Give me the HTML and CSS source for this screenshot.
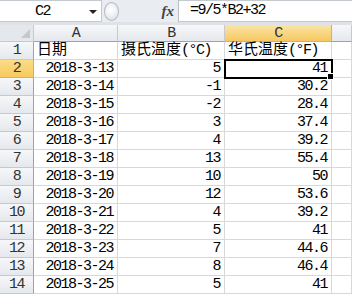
FILE: index.html
```html
<!DOCTYPE html>
<html lang="zh-CN">
<head>
    <meta charset="UTF-8">
    <meta name="viewport" content="width=device-width, initial-scale=1.0">
    <title>温度换算</title>
    <link rel="stylesheet" href="styles.css">
</head>
<body>
    <!-- Formula bar -->
    <div class="formula-bar">
        <div class="name-box">
            <span class="name-text">C2</span>
            <span class="drop-arrow"></span>
        </div>
        <div class="bar-middle">
            <span class="splitter"></span>
            <span class="fx">fx</span>
        </div>
        <div class="formula">=9/5*B2+32</div>
    </div>

    <div class="sheet">
        <div class="hdr corner"><span class="corner-tri"></span></div>
        <div class="hdr col">A</div>
        <div class="hdr col">B</div>
        <div class="hdr col active">C</div>
        <div class="hdr col"></div>
    </div>

    <script>
        const rows = [
            ["2018-3-13", "5", "41"],
            ["2018-3-14", "-1", "30.2"],
            ["2018-3-15", "-2", "28.4"],
            ["2018-3-16", "3", "37.4"],
            ["2018-3-17", "4", "39.2"],
            ["2018-3-18", "13", "55.4"],
            ["2018-3-19", "10", "50"],
            ["2018-3-20", "12", "53.6"],
            ["2018-3-21", "4", "39.2"],
            ["2018-3-22", "5", "41"],
            ["2018-3-23", "7", "44.6"],
            ["2018-3-24", "8", "46.4"],
            ["2018-3-25", "5", "41"]
        ];

        const sheet = document.querySelector('.sheet');

        function addCell(cls, html) {
            const div = document.createElement('div');
            div.className = cls;
            div.innerHTML = html;
            sheet.appendChild(div);
        }

        // header row of titles
        addCell('hdr row', '1');
        addCell('cell text', '日期');
        addCell('cell text', '摄氏温度<span class="latin">(°C)</span>');
        addCell('cell text', '华氏温度<span class="latin">(°F)</span>');
        addCell('cell', '');

        rows.forEach((r, i) => {
            addCell(i === 0 ? 'hdr row active' : 'hdr row', String(i + 2));
            addCell('cell num', r[0]);
            addCell('cell num', r[1]);
            addCell(i === 0 ? 'cell num selected' : 'cell num', r[2]);
            addCell('cell', '');
        });
    </script>
</body>
</html>
```

FILE: styles.css
```css
body {
    margin: 0;
    background-color: #dfe3e8;
    font-family: "Liberation Mono", "Noto Sans CJK SC", monospace;
    font-size: 15px;
    color: #000;
    overflow: hidden;
}
.formula-bar {
    display: flex;
    height: 22px;
    background-color: #e9ecf0;
}
.name-box {
    width: 102px;
    box-sizing: border-box;
    background-color: #fff;
    border: 1px solid #c4c9cf;
    border-left: none;
    display: flex;
    align-items: center;
    position: relative;
}
.name-text {
    margin-left: 35px;
    letter-spacing: -1.5px;
}
.drop-arrow {
    position: absolute;
    left: 89px;
    top: 9px;
    border-left: 4px solid transparent;
    border-right: 4px solid transparent;
    border-top: 4px solid #222;
}
.bar-middle {
    width: 77px;
    display: flex;
    align-items: center;
    justify-content: space-between;
    padding: 0 4px 0 2px;
    box-sizing: border-box;
    border-right: 1px solid #b9bec5;
}
.splitter {
    width: 13px;
    height: 17px;
    border: 1px solid #b4b9c0;
    border-radius: 50%;
    background: radial-gradient(circle at 45% 40%, #ffffff 0, #f4f5f7 35%, #d5d9de 100%);
}
.fx {
    font-family: "Liberation Serif", serif;
    font-style: italic;
    font-weight: bold;
    font-size: 15px;
    color: #444;
}
.formula {
    flex: 1;
    background-color: #fff;
    border-top: 1px solid #c4c9cf;
    border-bottom: 1px solid #c4c9cf;
    padding-left: 11px;
    line-height: 20px;
    letter-spacing: -1.5px;
}
.sheet {
    margin-top: 3px;
    display: grid;
    grid-template-columns: 34px 84px 107px 107px 1fr;
    grid-template-rows: 17px;
    grid-auto-rows: 18px;
    background-color: #fff;
}
.hdr {
    box-sizing: border-box;
    background: linear-gradient(#f6f7f9, #e5e8ec);
    border-right: 1px solid #c5cad0;
    border-bottom: 1px solid #c5cad0;
    color: #333;
    text-align: center;
    line-height: 17px;
    letter-spacing: -1.5px;
}
.hdr.corner {
    position: relative;
    background: #e4e7eb;
}
.corner-tri {
    position: absolute;
    right: 3px;
    bottom: 3px;
    border-left: 9px solid transparent;
    border-bottom: 9px solid #c3c8ce;
}
.hdr.col {
    border-bottom-color: #9aa3ad;
}
.hdr.row {
    line-height: 18px;
    border-right-color: #9aa3ad;
}
.hdr.active {
    background: linear-gradient(#fbe5a4, #f6c862);
    border-color: #e9a94c;
}
.hdr.row.active {
    background: linear-gradient(#fcdc87, #f7ca5d);
}
.cell {
    box-sizing: border-box;
    border-right: 1px solid #d8d8d8;
    border-bottom: 1px solid #d8d8d8;
    line-height: 18px;
    white-space: nowrap;
    overflow: visible;
}
.text {
    padding-left: 3px;
}
.latin {
    letter-spacing: -1.5px;
}
.num {
    text-align: right;
    padding-right: 4px;
    letter-spacing: -1.5px;
}
.selected {
    position: relative;
    outline: 2px solid #000;
    outline-offset: -1px;
}
.selected::after {
    content: "";
    position: absolute;
    right: -3px;
    bottom: -3px;
    width: 5px;
    height: 5px;
    background-color: #000;
    border: 1px solid #fff;
}
```
